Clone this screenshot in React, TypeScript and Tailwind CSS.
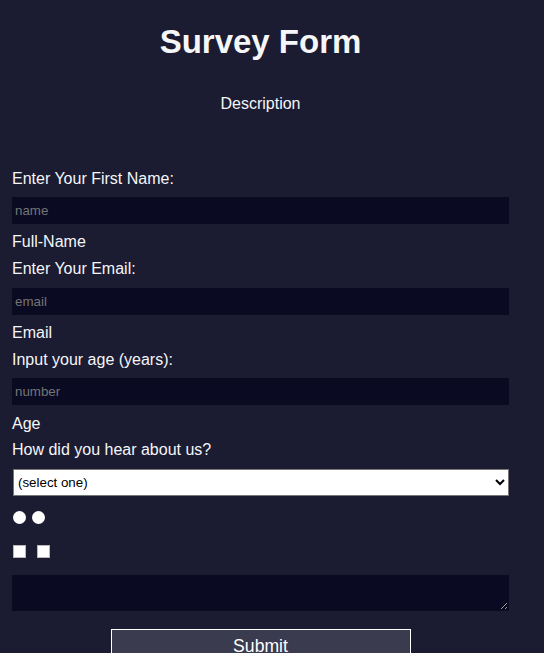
import React from 'react';

const labelCls = 'block leading-5 text-base';
const fieldCls =
  'block w-full h-[27px] px-[2px] bg-[#0a0a23] border border-[#0a0a23] text-white text-[13.33px] placeholder:text-[#757575] outline-none';

const App = () => {
  return (
    <div className="min-h-screen bg-[#1b1b32] text-[#f5f6f7] font-['Liberation_Sans',Arial,sans-serif]">
      <div className="ml-[12px] w-[497px] flex flex-col pb-8">
        <h1 className="mt-[22px] h-[40px] leading-[40px] text-center text-[33px] font-bold">Survey Form</h1>
        <p className="mt-[32px] leading-5 text-center text-base">Description</p>

        <form className="mt-[55px] flex flex-col" onSubmit={e => e.preventDefault()}>
          <label className={labelCls} htmlFor="name">Enter Your First Name:</label>
          <input id="name" type="text" placeholder="name" className={`mt-[8px] ${fieldCls}`} />
          <span className={`mt-[8px] ${labelCls}`}>Full-Name</span>

          <label className={`mt-[7px] ${labelCls}`} htmlFor="email">Enter Your Email:</label>
          <input id="email" type="email" placeholder="email" className={`mt-[9px] ${fieldCls}`} />
          <span className={`mt-[8px] ${labelCls}`}>Email</span>

          <label className={`mt-[7px] ${labelCls}`} htmlFor="age">Input your age (years):</label>
          <input id="age" type="number" placeholder="number" className={`mt-[8px] ${fieldCls}`} />
          <span className={`mt-[9px] ${labelCls}`}>Age</span>

          <label className={`mt-[6px] ${labelCls}`} htmlFor="referrer">How did you hear about us?</label>
          <select
            id="referrer"
            defaultValue=""
            className="mt-[9px] ml-[1px] w-[496px] h-[27px] pl-0 bg-white text-black border border-[#767676] text-[13.33px] font-['Liberation_Sans',Arial,sans-serif]"
          >
            <option value="">(select one)</option>
            <option value="1">freeCodeCamp News</option>
            <option value="2">freeCodeCamp YouTube Channel</option>
            <option value="3">Other</option>
          </select>

          {/* radios */}
          <div className="mt-[15px] ml-[1px] flex gap-[6px] h-[13px]">
            <input type="radio" name="kind" className="appearance-none m-0 w-[13px] h-[13px] rounded-full bg-white" />
            <input type="radio" name="kind" className="appearance-none m-0 w-[13px] h-[13px] rounded-full bg-white" />
          </div>

          {/* checkboxes */}
          <div className="mt-[21px] ml-[1px] flex gap-[11px] h-[13px]">
            <input type="checkbox" className="appearance-none m-0 w-[13px] h-[13px] bg-white border border-[#b8b8b8]" />
            <input type="checkbox" className="appearance-none m-0 w-[13px] h-[13px] bg-white border border-[#b8b8b8]" />
          </div>

          <textarea className="mt-[17px] block w-full h-[36px] bg-[#0a0a23] border border-[#0a0a23] text-white outline-none" />

          <button
            type="submit"
            className="mt-[18px] mx-auto block w-[300px] h-[35px] bg-[#3b3b4f] border border-white text-white text-[17.6px] leading-[33px]"
          >
            Submit
          </button>
        </form>
      </div>
    </div>
  );
};

export default App;
